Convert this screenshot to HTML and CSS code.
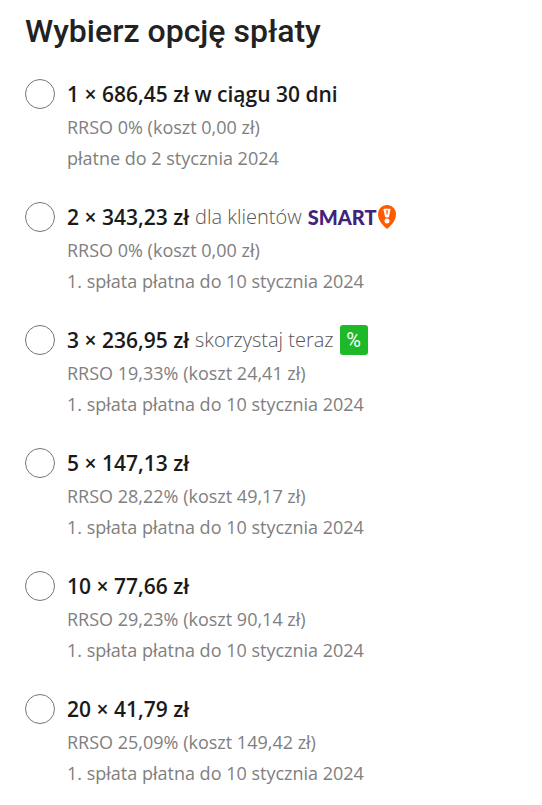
FILE: index.html
```
<!DOCTYPE html>
<html lang="pl">
<head>
    <meta charset="UTF-8">
    <meta name="viewport" content="width=device-width, initial-scale=1.0">
    <title>Wybierz opcję spłaty</title>
    <link rel="stylesheet" href="styles.css">
</head>
<body>
    <form class="payment">
        <h1 id="payment-title">Wybierz opcję spłaty</h1>
        <div class="options" role="radiogroup" aria-labelledby="payment-title">
            <label class="option">
                <input type="radio" name="installments" value="1">
                <span class="details">
                    <span class="price"><strong>1 × 686,45 zł w ciągu 30 dni</strong></span>
                    <span class="info">RRSO 0% (koszt 0,00 zł)</span>
                    <span class="info">płatne do 2 stycznia 2024</span>
                </span>
            </label>
            <label class="option">
                <input type="radio" name="installments" value="2">
                <span class="details">
                    <span class="price">
                        <strong>2 × 343,23 zł</strong>
                        <span>dla klientów</span>
                        <span class="smart">SMART<svg class="pin" viewBox="0 0 18 24" aria-hidden="true">
                            <path fill="#ff5a00" d="M9 0C4 0 0 4 0 9c0 6 4.500 11.500 9 15 4.500-3.500 9-9 9-15 0-5-4-9-9-9z"/>
                            <path fill="#fff" d="M6.200 3.800h5.600c.5 0 .8.400.7.900l-1.500 7c-.1.500-.4.700-.8.700H7.800c-.4 0-.7-.2-.8-.7l-1.500-7c-.1-.5.200-.9.700-.9z"/>
                            <path fill="#ff5a00" d="M8.200 5.200h1.600l-.4 4.500h-.8z"/>
                            <circle cx="9" cy="16" r="2.500" fill="#fff"/>
                        </svg></span>
                    </span>
                    <span class="info">RRSO 0% (koszt 0,00 zł)</span>
                    <span class="info">1. spłata płatna do 10 stycznia 2024</span>
                </span>
            </label>
            <label class="option">
                <input type="radio" name="installments" value="3">
                <span class="details">
                    <span class="price">
                        <strong>3 × 236,95 zł</strong>
                        <span>skorzystaj teraz</span>
                        <span class="badge">%</span>
                    </span>
                    <span class="info">RRSO 19,33% (koszt 24,41 zł)</span>
                    <span class="info">1. spłata płatna do 10 stycznia 2024</span>
                </span>
            </label>
            <label class="option">
                <input type="radio" name="installments" value="5">
                <span class="details">
                    <span class="price"><strong>5 × 147,13 zł</strong></span>
                    <span class="info">RRSO 28,22% (koszt 49,17 zł)</span>
                    <span class="info">1. spłata płatna do 10 stycznia 2024</span>
                </span>
            </label>
            <label class="option">
                <input type="radio" name="installments" value="10">
                <span class="details">
                    <span class="price"><strong>10 × 77,66 zł</strong></span>
                    <span class="info">RRSO 29,23% (koszt 90,14 zł)</span>
                    <span class="info">1. spłata płatna do 10 stycznia 2024</span>
                </span>
            </label>
            <label class="option">
                <input type="radio" name="installments" value="20">
                <span class="details">
                    <span class="price"><strong>20 × 41,79 zł</strong></span>
                    <span class="info">RRSO 25,09% (koszt 149,42 zł)</span>
                    <span class="info">1. spłata płatna do 10 stycznia 2024</span>
                </span>
            </label>
        </div>
    </form>
</body>
</html>
```
FILE: styles.css
```
body {
    margin: 0;
    background-color: #fff;
    font-family: "Open Sans", sans-serif;
    color: #222;
}

.payment {
    padding: 12px 25px 0;
}

h1 {
    margin: 0 0 27px;
    font-family: Roboto, sans-serif;
    font-size: 32px;
    font-weight: 500;
    line-height: 38px;
}

.options {
    display: flex;
    flex-direction: column;
    gap: 26px;
}

.option {
    display: flex;
    gap: 12px;
    cursor: pointer;
}

.option input {
    appearance: none;
    flex: none;
    width: 30px;
    height: 30px;
    margin: 2px 0 0;
    border: 1px solid #767676;
    border-radius: 50%;
    background-color: #fff;
    cursor: pointer;
}

.option input:checked {
    border: 9px solid #ff5a00;
}

.details {
    display: flex;
    flex-direction: column;
}

.price {
    display: flex;
    align-items: center;
    gap: 6px;
    height: 33px;
    padding-bottom: 2px;
    font-size: 20px;
    font-weight: 300;
    color: #555;
}

.price strong {
    font-size: 21px;
    font-weight: 600;
    color: #1a1a1a;
}

.info {
    font-size: 18px;
    line-height: 31px;
    color: #808080;
}

.smart {
    display: flex;
    align-items: center;
    gap: 2px;
    font-family: Lato, sans-serif;
    font-size: 20px;
    font-weight: 900;
    line-height: 24px;
    color: #41237a;
}

.pin {
    width: 18px;
    height: 24px;
}

.badge {
    width: 28px;
    border-radius: 3px;
    background-color: #1db928;
    font-family: Roboto, sans-serif;
    font-weight: 400;
    line-height: 30px;
    text-align: center;
    color: #fff;
}
```
